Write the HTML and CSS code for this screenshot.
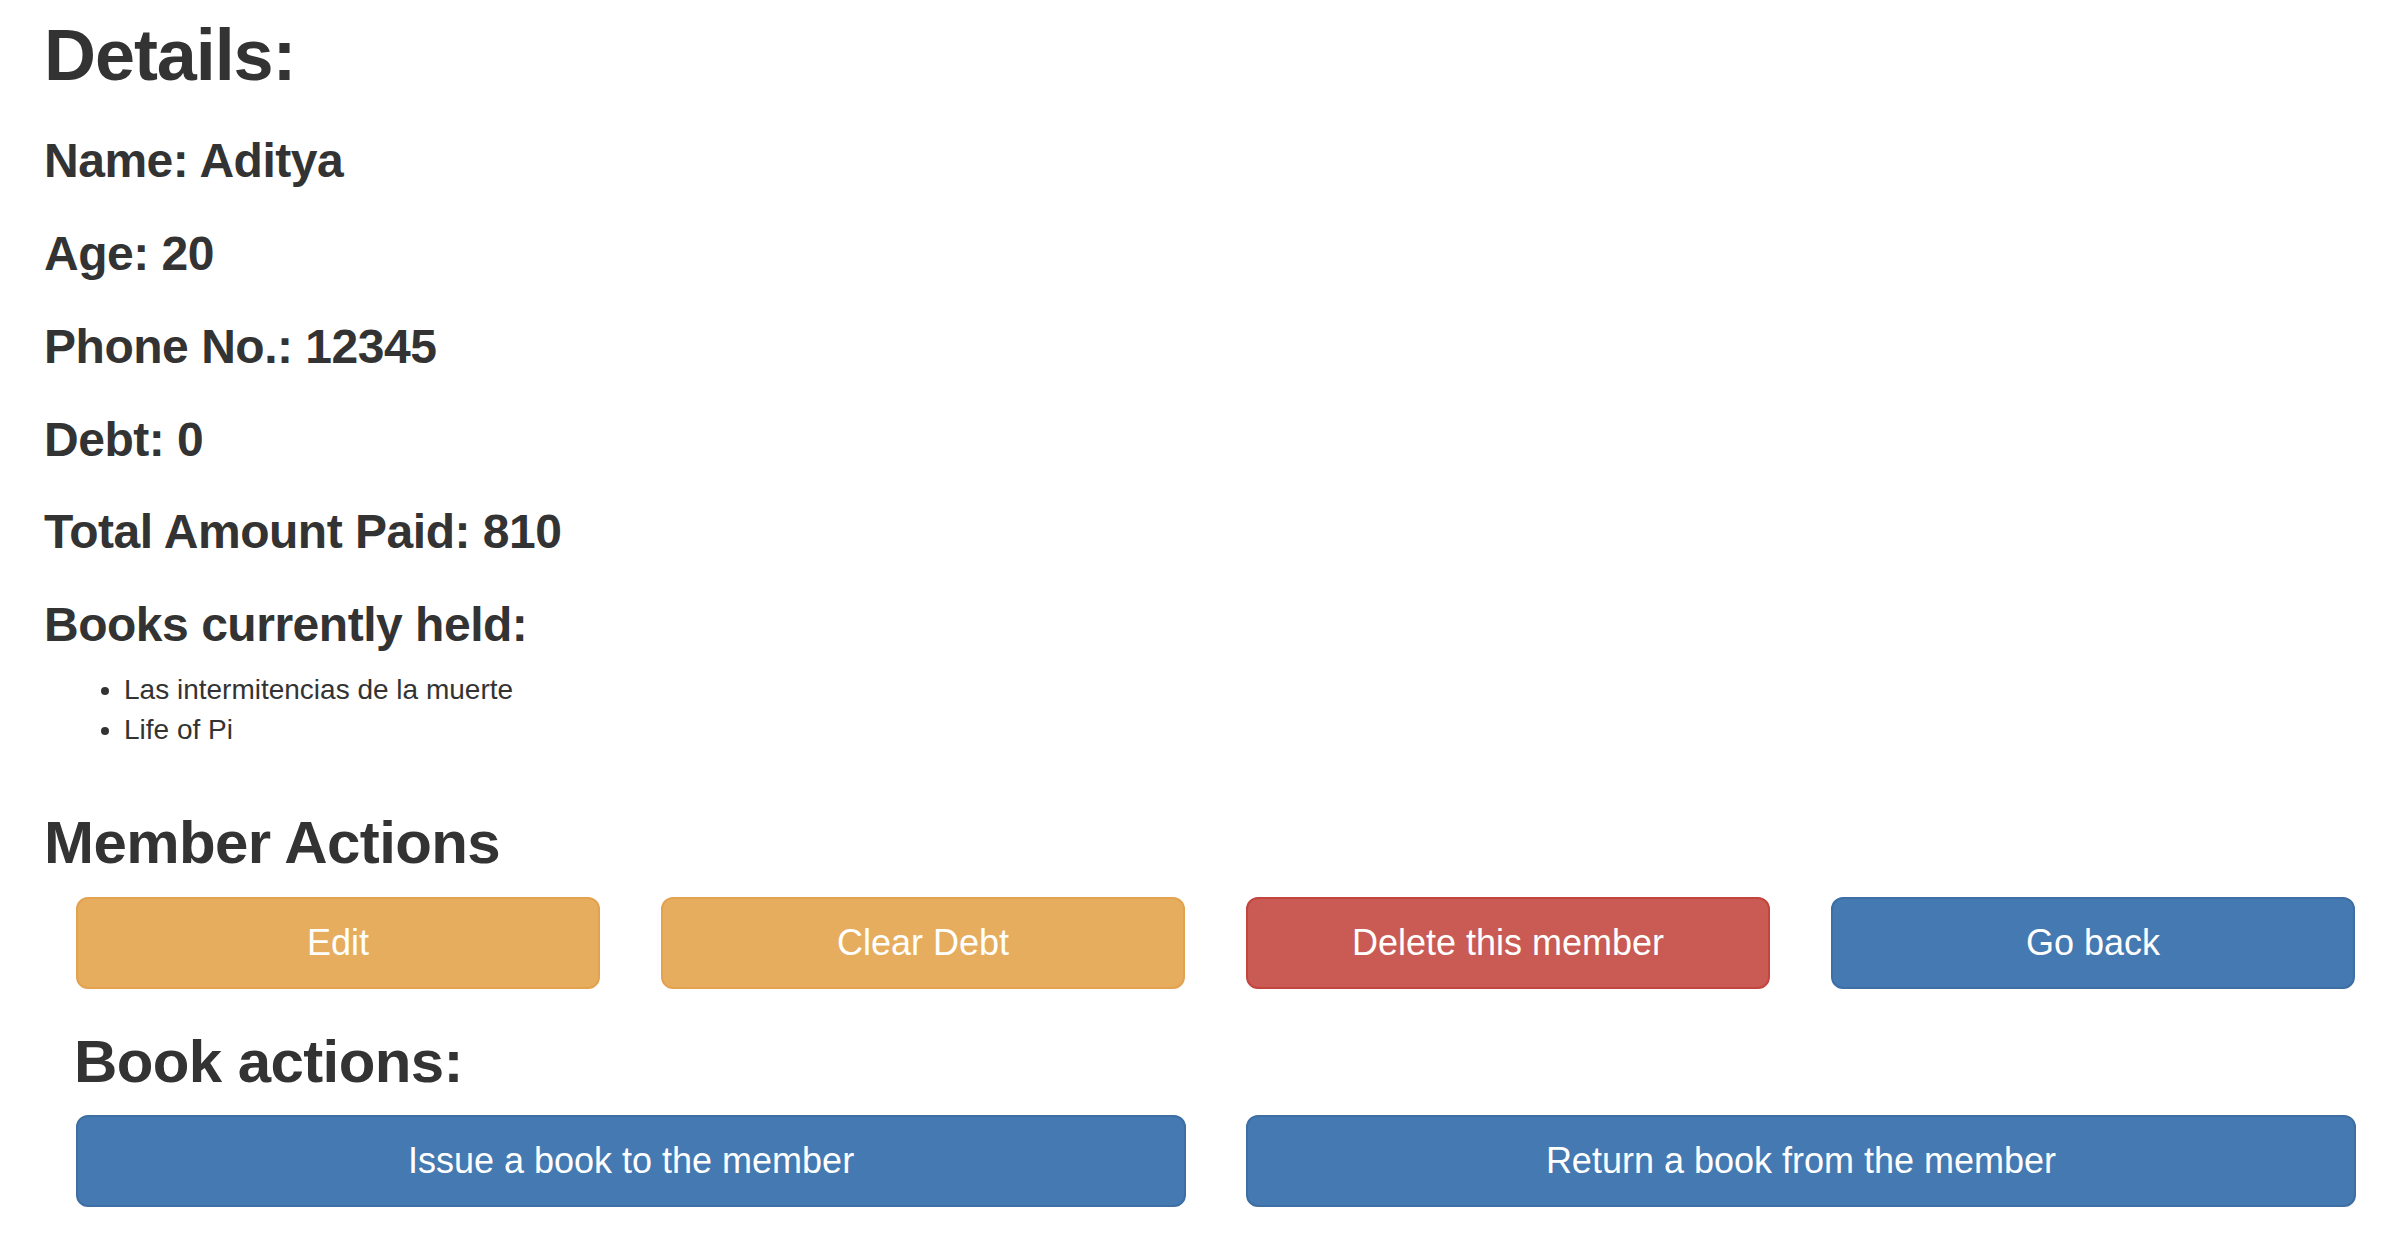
FILE: index.html
```html
<!DOCTYPE html>
<html lang="en">
<head>
<meta charset="utf-8">
<title>Member details</title>
<link rel="stylesheet" href="styles.css">
</head>
<body>
<div class="page">
  <h1 class="title">Details:</h1>
  <h3 class="field">Name: Aditya</h3>
  <h3 class="field">Age: 20</h3>
  <h3 class="field">Phone No.: 12345</h3>
  <h3 class="field">Debt: 0</h3>
  <h3 class="field">Total Amount Paid: 810</h3>
  <h3 class="field field-last">Books currently held:</h3>
  <ul class="books">
    <li>Las intermitencias de la muerte</li>
    <li>Life of Pi</li>
  </ul>
  <h2 class="section">Member Actions</h2>
  <div class="btn-row four">
    <button class="btn warning">Edit</button>
    <button class="btn warning">Clear Debt</button>
    <button class="btn danger">Delete this member</button>
    <button class="btn primary">Go back</button>
  </div>
  <h2 class="section sub">Book actions:</h2>
  <div class="btn-row two">
    <button class="btn primary">Issue a book to the member</button>
    <button class="btn primary">Return a book from the member</button>
  </div>
</div>
</body>
</html>
```
FILE: styles.css
```css
* { box-sizing: border-box; }
html, body {
  margin: 0;
  padding: 0;
  background: #fff;
}
body {
  font-family: "Liberation Sans", Arial, sans-serif;
  color: #333;
  font-size: 28px;
  line-height: 40px;
}
.page {
  padding: 16px 8px 0 44px;
}
.title {
  font-size: 72px;
  line-height: 79.2px;
  font-weight: bold;
  letter-spacing: -0.015em;
  margin: 0 0 40px 0;
}
.field {
  font-size: 48px;
  line-height: 52.8px;
  font-weight: bold;
  letter-spacing: -0.01em;
  margin: 0 0 40px 0;
}
.field-last {
  margin-bottom: 18px;
}
.books {
  margin: 0 0 60px 0;
  padding-left: 80px;
}
.section {
  font-size: 60px;
  line-height: 66px;
  font-weight: bold;
  letter-spacing: -0.01em;
  margin: 0 0 21px 0;
}
.section.sub {
  margin: 40px 0 20px 30px;
}
.btn-row {
  display: grid;
  margin-left: 32px;
  column-gap: 61px;
}
.btn-row.four {
  grid-template-columns: repeat(4, 524px);
}
.btn-row.two {
  grid-template-columns: repeat(2, 1110px);
  column-gap: 60px;
}
.btn {
  font-family: "Liberation Sans", Arial, sans-serif;
  height: 92px;
  font-size: 36px;
  line-height: 48px;
  padding: 20px 32px;
  border: 2px solid transparent;
  border-radius: 12px;
  color: #fff;
  text-align: center;
  cursor: pointer;
}
.warning {
  background: #e6ad5e;
  border-color: #e3a250;
}
.danger {
  background: #c95b54;
  border-color: #c2463f;
}
.primary {
  background: #4479b2;
  border-color: #3d6ea4;
}
```
